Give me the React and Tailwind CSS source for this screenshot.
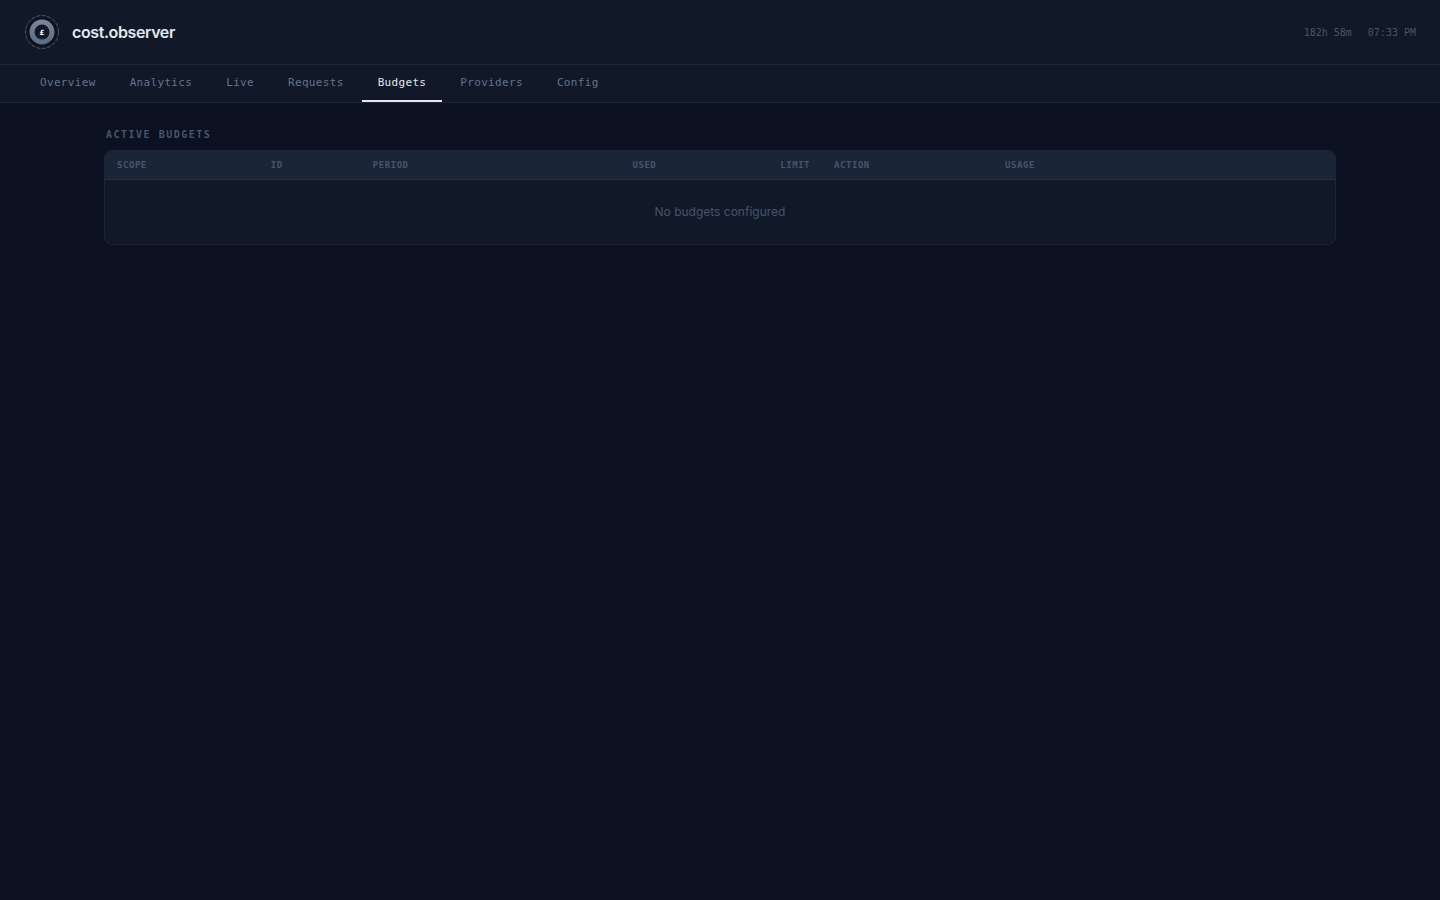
import React, { useState } from 'react';

const TABS = ['Overview', 'Analytics', 'Live', 'Requests', 'Budgets', 'Providers', 'Config'];

const COLUMNS = [
    { label: 'Scope', className: 'w-[12.5%] text-left' },
    { label: 'ID', className: 'w-[8.3%] text-left' },
    { label: 'Period', className: 'w-[12.5%] text-left' },
    { label: 'Used', className: 'w-[12.5%] text-right' },
    { label: 'Limit', className: 'w-[12.5%] text-right' },
    { label: 'Action', className: 'w-[13.9%] text-left' },
    { label: 'Usage', className: 'text-left' },
];

const Logo = () => (
    <svg viewBox="0 0 36 36" className="size-9" aria-hidden="true">
        <defs>
            <linearGradient id="ring" x1="0" y1="0" x2="0" y2="1">
                <stop offset="0" stopColor="#7b879b" />
                <stop offset="1" stopColor="#5b6b82" />
            </linearGradient>
        </defs>
        <circle cx="18" cy="18" r="16.5" fill="none" stroke="#4b5768" strokeWidth="1" strokeDasharray="4 1.5" />
        <circle cx="18" cy="18" r="14.5" fill="#0c101b" />
        <circle cx="18" cy="18" r="12.5" fill="url(#ring)" />
        <circle cx="18" cy="18" r="7.5" fill="#111827" />
        <text
            x="18"
            y="21"
            textAnchor="middle"
            fill="#f8fafc"
            fontSize="7"
            fontWeight="700"
            fontFamily="DejaVu Sans, sans-serif"
        >
            £
        </text>
    </svg>
);

const Header = () => (
    <header className="flex items-center justify-between h-[65px] px-6 bg-[#111827] border-b border-[#1e2636]">
        <div className="flex items-center gap-3">
            <Logo />
            <h1 className="font-['Inter',sans-serif] text-base font-semibold tracking-tight text-slate-200">
                cost.observer
            </h1>
        </div>
        <div className="flex gap-4 text-[10px] text-slate-600">
            <span>182h 58m</span>
            <span>07:33 PM</span>
        </div>
    </header>
);

const Tabs = ({ active, onSelect }) => (
    <nav className="flex gap-[2px] h-[38px] px-6 bg-[#111827] border-b border-[#1e2636]">
        {TABS.map((tab) => (
            <button
                key={tab}
                type="button"
                onClick={() => onSelect(tab)}
                className={`px-4 pt-[2px] border-b-2 text-[11px] tracking-[0.03em] cursor-pointer ${
                    tab === active
                        ? 'border-slate-200 text-slate-200'
                        : 'border-transparent text-slate-500 hover:text-slate-400'
                }`}
            >
                {tab}
            </button>
        ))}
    </nav>
);

const Budgets = ({ budgets }) => (
    <section>
        <h2 className="px-[2px] mb-2 text-[10px] leading-[15px] font-bold uppercase tracking-[0.15em] text-slate-600">
            Active Budgets
        </h2>
        <div className="overflow-hidden rounded-lg border border-[#1e2636] bg-[#111827]">
            <table className="w-full table-fixed">
                <thead>
                    <tr className="bg-[#1a2538] border-b border-[#263042]">
                        {COLUMNS.map((col) => (
                            <th
                                key={col.label}
                                scope="col"
                                className={`px-3 py-2 text-[9px] leading-3 font-bold uppercase tracking-[0.06em] text-slate-600 ${col.className}`}
                            >
                                {col.label}
                            </th>
                        ))}
                    </tr>
                </thead>
                <tbody>
                    {budgets.length === 0 && (
                        <tr>
                            <td
                                colSpan={COLUMNS.length}
                                className="py-6 text-center font-['Inter',sans-serif] text-xs text-slate-600"
                            >
                                No budgets configured
                            </td>
                        </tr>
                    )}
                </tbody>
            </table>
        </div>
    </section>
);

const App = () => {
    const [active, setActive] = useState('Budgets');

    return (
        <div className="min-h-screen bg-[#0b1120] font-['DejaVu_Sans_Mono',monospace]">
            <Header />
            <Tabs active={active} onSelect={setActive} />
            <main className="max-w-7xl mx-auto px-6 py-6">
                {active === 'Budgets' && <Budgets budgets={[]} />}
            </main>
        </div>
    );
};

export default App;
